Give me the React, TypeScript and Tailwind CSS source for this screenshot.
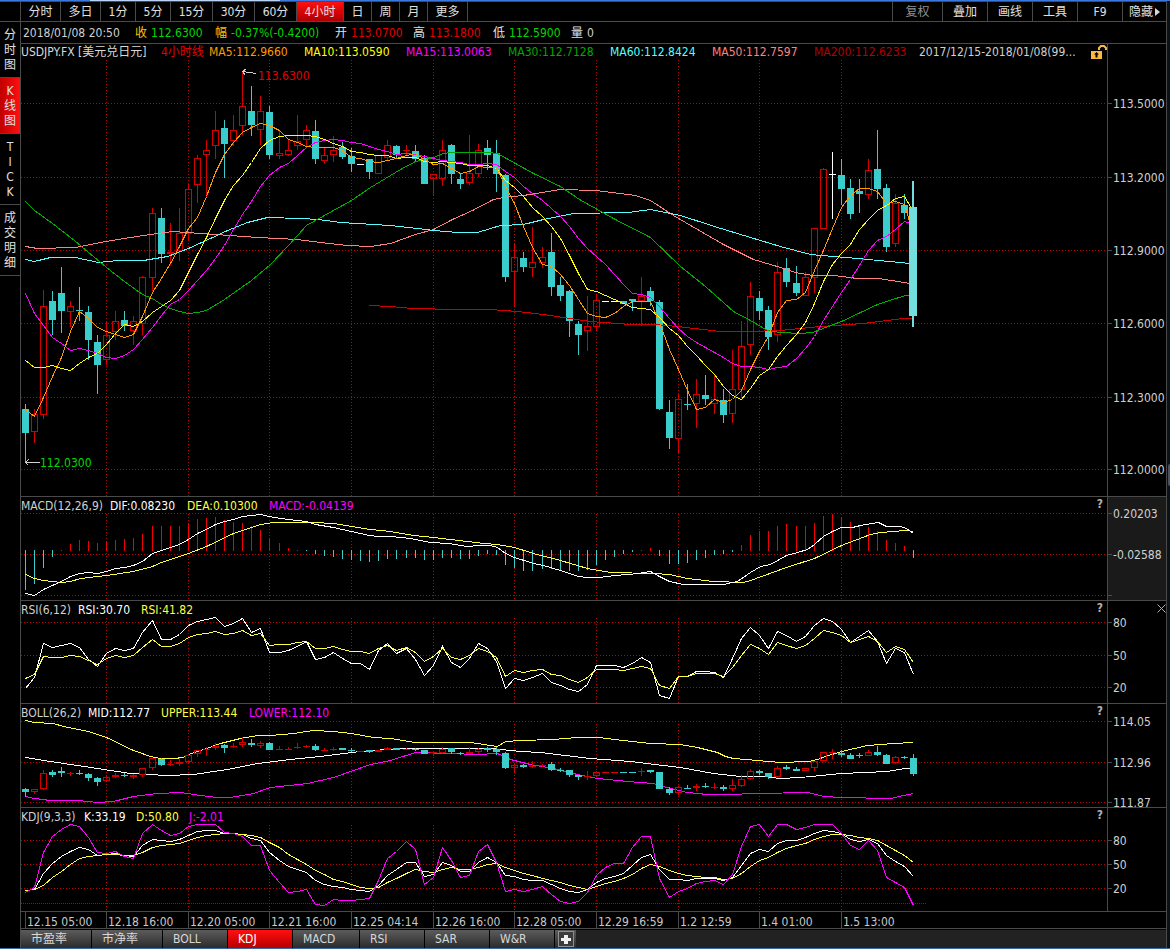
import React from "react";

/* ---------- scale helpers ---------- */

const LEFT = 21;
const cx = (i: number) => Math.floor(25.006 + 9.0713 * i);

type Kind = "u" | "d" | "w";
type Candle = [Kind, number, number, number, number]; // kind, high, body top, body bottom, low

const CANDLES: Candle[] = [
  ["d", 404, 409, 433, 462], ["u", 409, 414, 432, 443], ["u", 290, 306, 415, 419], ["d", 291, 301, 320, 335],
  ["d", 267, 293, 311, 333], ["u", 301, 306, 312, 327], ["d", 287, 310, 311, 321], ["d", 306, 312, 340, 360],
  ["d", 335, 342, 365, 394], ["u", 321, 335, 360, 365], ["u", 311, 321, 332, 340], ["d", 311, 320, 326, 331],
  ["u", 316, 321, 331, 345], ["u", 276, 277, 324, 335], ["u", 208, 213, 278, 291], ["d", 208, 218, 254, 263],
  ["u", 223, 252, 254, 265], ["u", 208, 233, 251, 261], ["u", 184, 189, 234, 240], ["u", 155, 158, 185, 203],
  ["u", 140, 150, 155, 198], ["u", 111, 130, 146, 159], ["d", 120, 128, 144, 178], ["u", 115, 130, 141, 146],
  ["u", 71, 106, 126, 135], ["d", 86, 111, 125, 136], ["u", 96, 111, 130, 145], ["d", 106, 112, 155, 159],
  ["u", 130, 153, 156, 159], ["u", 140, 150, 155, 156], ["u", 115, 141, 146, 150], ["u", 125, 130, 140, 147],
  ["d", 120, 131, 159, 164], ["u", 147, 155, 161, 164], ["u", 136, 150, 155, 162], ["d", 142, 147, 157, 159],
  ["d", 148, 156, 164, 172], ["w", 164, 164, 165, 165], ["d", 159, 159, 172, 179], ["u", 155, 155, 174, 174],
  ["u", 140, 145, 158, 160], ["d", 145, 146, 155, 158], ["u", 145, 150, 151, 155], ["d", 145, 151, 159, 162],
  ["d", 155, 158, 184, 184], ["u", 174, 174, 179, 196], ["u", 140, 150, 179, 186], ["d", 144, 145, 174, 184],
  ["d", 174, 179, 184, 189], ["u", 135, 173, 183, 185], ["u", 144, 150, 174, 177], ["d", 140, 148, 155, 170],
  ["d", 140, 153, 174, 192], ["d", 174, 175, 277, 282], ["u", 243, 257, 272, 307], ["d", 252, 258, 267, 272],
  ["u", 227, 262, 268, 277], ["u", 247, 257, 263, 268], ["d", 233, 252, 287, 296], ["d", 277, 285, 296, 301],
  ["d", 290, 291, 321, 337], ["d", 321, 324, 335, 355], ["u", 296, 326, 331, 351], ["u", 294, 300, 327, 331],
  ["w", 301, 301, 302, 302], ["w", 301, 301, 302, 302], ["d", 301, 301, 304, 304], ["d", 299, 299, 301, 311],
  ["u", 277, 296, 301, 326], ["d", 287, 291, 301, 306], ["d", 300, 302, 409, 410], ["d", 400, 412, 438, 449],
  ["u", 394, 399, 439, 453], ["d", 384, 404, 405, 410], ["u", 379, 394, 404, 428], ["d", 375, 395, 399, 405],
  ["u", 375, 399, 404, 414], ["d", 389, 400, 415, 423], ["u", 350, 389, 414, 423], ["u", 321, 346, 390, 398],
  ["u", 282, 296, 345, 355], ["d", 291, 298, 311, 320], ["d", 306, 310, 337, 350], ["u", 262, 272, 335, 342],
  ["d", 258, 268, 282, 287], ["d", 266, 283, 293, 296], ["u", 272, 277, 296, 296], ["u", 228, 228, 278, 293],
  ["u", 168, 169, 229, 229], ["w", 152, 174, 175, 219], ["d", 159, 175, 189, 205], ["d", 179, 188, 214, 219],
  ["d", 179, 191, 194, 213], ["u", 159, 170, 195, 199], ["d", 130, 169, 189, 199], ["d", 184, 188, 247, 252],
  ["u", 194, 203, 244, 247], ["d", 194, 205, 213, 219], ["d", 181, 207, 316, 327],
];

const closes = CANDLES.map(([k, , t, b]) => (k === "d" ? b : t));

const average = (n: number, seed: number[]) =>
  closes.map((_, i) =>
    i < n - 1 ? seed[i] : Math.round(closes.slice(i - n + 1, i + 1).reduce((a, b) => a + b, 0) / n),
  );

const series = (ys: number[]) => ys.map((y, i) => `${cx(i)},${y}`).join(" ");

const MA5 = series(average(5, [409, 416, 397, 376]));
const MA10 = series(average(10, [360, 367, 367, 365, 368, 370, 363, 357, 353]));
const MA15 = series(average(15, [293, 313, 325, 337, 343, 350, 348, 350, 353, 357, 358, 355, 349, 339]));
const MA30 =
  "25,201 34,210 52,223 61,230 74,240 81,246 106,267 124,281 142,294 152,298 161,304 170,308 179,311 188,313 197,312 206,310 224,299 251,280 270,264 288,245 306,225 351,200 370,187 390,175 400,169 415,161 433,157 443,153 451,152 487,152 497,153 533,173 560,186 579,199 613,218 650,237 680,266 705,286 733,311 750,320 767,330 772,331 780,332 800,333 812,332 841,321 877,304 886,301 905,295 910,295";
const MA60 =
  "25,259 34,261 50,257 75,257 98,262 117,260 143,260 167,256 188,248 210,238 227,230 247,222 267,217 300,218 318,219 340,222 390,225 417,228 433,230 457,232 477,232 500,225 523,224 543,219 573,213 628,212 650,209 680,215 714,226 750,237 780,246 810,254 857,258 910,263";
const MA50 =
  "25,246 37,248 75,247 100,242 123,238 150,234 172,231 200,233 230,235 257,237 297,239 320,242 347,245 370,246 390,243 415,234 433,229 452,219 472,210 493,199 503,197 523,195 560,189 595,190 635,195 650,200 673,215 697,229 723,244 753,259 780,267 795,272 812,275 833,275 857,278 878,278 910,283";
const MA200 =
  "369,305 390,306 412,308 457,309 490,309 517,311 543,314 590,321 630,324 653,324 677,326 720,331 760,331 767,330 780,330 820,326 863,323 903,318 913,318";

const MACD_BARS = [
  590, 584, 568, 557, 550, 544, 540, 541, 543, 542, 540, 539, 538, 534, 526, 526, 526, 526, 523, 519, 518, 517, 520,
  522, 523, 526, 530, 538, 543, 548, 550, 551, 554, 556, 557, 559, 560, 561, 562, 561, 559, 559, 558, 558, 560, 560,
  558, 558, 559, 559, 556, 554, 555, 565, 568, 571, 571, 569, 569, 571, 571, 571, 570, 565, 560, 557, 554, 552, 550,
  548, 556, 564, 564, 563, 560, 558, 555, 554, 552, 545, 535, 531, 531, 526, 524, 526, 526, 523, 516, 514, 517, 522,
  526, 527, 531, 540, 543, 546, 558,
];
const DIF =
  "25,593 34,595 43,589 52,585 61,581 70,576 79,573 88,572 97,573 106,571 115,568 124,567 133,565 142,561 152,553 161,550 170,547 179,544 188,539 197,533 206,529 215,524 224,521 233,519 242,516 251,515 260,514 269,516 280,518 297,520 306,521 315,524 333,527 351,531 369,535 378,536 390,536 410,538 430,542 448,543 467,546 478,545 490,545 497,547 505,553 514,557 533,563 543,565 560,570 578,576 587,577 598,577 615,575 638,573 650,571 659,576 669,581 683,584 710,584 723,584 737,581 750,572 760,566 770,564 786,555 797,552 807,549 814,544 823,536 832,531 841,527 852,527 860,525 878,522 886,526 900,526 906,528 913,533";
const DEA =
  "25,574 34,578 43,580 61,582 70,581 80,578 106,575 133,571 152,566 161,562 188,553 206,546 233,533 260,524 273,522 313,522 333,523 351,526 370,529 390,531 413,535 433,537 467,541 483,543 497,544 514,547 533,553 560,560 587,568 610,572 653,573 669,574 687,578 713,581 743,582 750,580 786,567 814,558 841,545 870,534 880,532 905,530 913,531";

const RSI6 = series([
  688, 677, 643, 647, 645, 643, 647, 659, 666, 653, 648, 650, 648, 632, 620, 639, 639, 634, 625, 621, 619, 617, 626,
  623, 618, 632, 628, 652, 652, 650, 646, 641, 659, 657, 652, 658, 663, 663, 669, 650, 643, 653, 648, 659, 675, 665,
  646, 662, 667, 658, 643, 648, 661, 688, 678, 680, 677, 673, 682, 685, 689, 691, 684, 665, 665, 665, 667, 663, 657,
  662, 695, 698, 676, 676, 671, 671, 672, 677, 658, 638, 627, 635, 648, 631, 635, 641, 636, 625, 618, 621, 629, 642,
  636, 630, 641, 663, 648, 652, 674,
]);
const RSI12 = series([
  678, 674, 656, 657, 657, 655, 656, 660, 664, 658, 655, 657, 655, 647, 639, 646, 646, 643, 637, 634, 633, 631, 634,
  633, 630, 635, 633, 645, 644, 644, 642, 641, 648, 648, 646, 649, 651, 651, 653, 648, 645, 650, 647, 652, 661, 656,
  648, 657, 659, 655, 648, 651, 657, 676, 670, 672, 670, 669, 674, 675, 679, 682, 677, 669, 669, 669, 670, 668, 666,
  668, 685, 688, 676, 676, 673, 673, 673, 676, 667, 655, 644, 648, 654, 642, 645, 648, 645, 638, 630, 632, 635, 642,
  639, 636, 641, 652, 646, 649, 662,
]);

const UPPER =
  "25,720 34,722 53,723 63,726 88,731 106,737 133,750 150,756 160,758 173,758 183,757 188,754 206,748 220,743 240,738 257,735 270,735 293,733 313,730 333,731 351,733 373,737 390,738 415,742 470,742 497,746 505,741 520,740 553,739 577,737 598,737 623,740 650,743 680,744 697,747 717,752 725,756 733,758 757,760 780,762 808,761 817,759 825,756 841,751 867,745 893,743 913,742";
const MID =
  "25,757 50,761 77,765 97,768 130,773 147,774 167,775 193,774 227,769 257,763 290,759 320,756 351,752 370,750 390,749 400,748 457,748 490,748 520,751 540,752 590,758 630,761 663,765 680,767 713,773 740,776 763,776 780,778 800,777 841,773 887,771 905,768 913,768";
const LOWER =
  "25,796 34,798 50,800 77,800 97,802 113,801 133,796 157,793 180,792 200,795 217,797 230,797 253,793 270,787 307,783 333,777 353,770 370,764 390,760 415,752 450,753 477,754 497,753 510,759 530,764 553,768 577,774 597,778 627,781 653,783 670,788 687,792 707,794 727,794 757,793 808,792 823,796 841,797 890,798 903,795 913,793";

const KLINE = series([
  890, 889, 873, 863, 856, 851, 847, 849, 855, 854, 853, 855, 856, 845, 839, 840, 841, 839, 835, 831, 830, 830, 833,
  833, 834, 838, 840, 852, 860, 866, 869, 872, 880, 884, 886, 887, 889, 890, 891, 885, 875, 869, 862, 862, 876, 874,
  862, 865, 871, 871, 862, 857, 862, 875, 876, 879, 880, 880, 884, 888, 891, 892, 889, 882, 878, 876, 873, 865, 857,
  854, 869, 879, 879, 880, 878, 878, 878, 880, 877, 865, 853, 849, 851, 843, 840, 840, 837, 833, 830, 831, 833, 839,
  841, 839, 843, 855, 861, 866, 876,
]);
const DLINE = series([
  890, 889, 885, 877, 871, 864, 858, 856, 855, 854, 854, 855, 855, 852, 847, 845, 844, 843, 840, 837, 835, 834, 833,
  833, 834, 835, 837, 842, 847, 854, 859, 864, 870, 874, 879, 881, 884, 887, 888, 887, 882, 878, 873, 869, 871, 872,
  869, 867, 869, 869, 867, 864, 863, 867, 870, 873, 875, 878, 880, 882, 885, 887, 889, 886, 883, 881, 878, 874, 868,
  864, 866, 870, 873, 875, 876, 877, 877, 879, 878, 873, 866, 860, 857, 852, 848, 845, 843, 839, 836, 834, 834, 835,
  837, 838, 840, 845, 850, 855, 862,
]);
const JLINE = series([
  892, 887, 852, 836, 829, 824, 826, 837, 852, 853, 851, 856, 858, 833, 824, 830, 835, 833, 826, 824, 824, 824, 832,
  833, 836, 845, 845, 870, 882, 892, 891, 889, 904, 905, 899, 900, 900, 899, 898, 880, 858, 851, 841, 849, 884, 877,
  847, 860, 877, 875, 851, 844, 862, 891, 889, 891, 889, 886, 894, 901, 903, 901, 892, 875, 867, 863, 863, 847, 836,
  836, 878, 897, 891, 888, 883, 881, 880, 884, 874, 846, 826, 824, 836, 824, 824, 829, 827, 824, 824, 824, 833, 845,
  849, 840, 850, 877, 882, 887, 905,
]);

const DATES = [
  "12.15 05:00", "12.18 16:00", "12.20 05:00", "12.21 16:00", "12.25 04:14", "12.26 16:00", "12.28 05:00",
  "12.29 16:59", "1.2 12:59", "1.4 01:00", "1.5 13:00",
];

/* ---------- drawing parts ---------- */

function Line({ points, color }: { points: string; color: string }) {
  return <polyline points={points} fill="none" stroke={color} transform="translate(0.5 0.5)" />;
}

function Candles({ map, compact }: { map: (y: number) => number; compact?: boolean }) {
  return (
    <>
      {CANDLES.map(([kind, high, top, bottom, low], i) => {
        const x = cx(i);
        const [h, t, b, l] = [high, top, bottom, low].map((y) => Math.round(map(y)));
        const body = Math.max(1, b - t);
        if (kind === "u" || (compact && kind === "w")) {
          return (
            <g key={i} fill="#d40000">
              <rect x={x} y={h} width={1} height={Math.max(0, t - h)} />
              <rect x={x} y={b} width={1} height={Math.max(0, l - b)} />
              {body > 2 ? (
                <rect x={x - 2.5} y={t + 0.5} width={6} height={body - 1} fill="none" stroke="#d40000" />
              ) : (
                <rect x={x - 3} y={t} width={7} height={body} />
              )}
            </g>
          );
        }
        return (
          <g key={i} fill={kind === "w" ? "#ffffff" : "#3bcccc"}>
            <rect x={x} y={h} width={1} height={Math.max(1, l - h)} />
            <rect x={x - 3} y={t} width={7} height={body} />
          </g>
        );
      })}
    </>
  );
}

function Plot({
  top, rows, className, label, vTop, children,
}: {
  top: number; rows: number[]; className: string; label: string; vTop: number; children: React.ReactNode;
}) {
  return (
    <svg
      role="img"
      aria-label={label}
      className={`block w-full shrink-0 overflow-hidden ${className}`}
      shapeRendering="crispEdges"
    >
      {rows.map((y) => (
        <line key={y} x1="0" x2="100%" y1={y - top + 0.5} y2={y - top + 0.5} stroke="#b80000" strokeDasharray="1 2" />
      ))}
      <g transform={`translate(${-LEFT} ${-top})`}>
        {DATES.slice(1).map((d, k) => {
          const x = cx((k + 1) * 9) + 0.5;
          return <line key={d} x1={x} x2={x} y1={vTop} y2={top + 500} stroke="#b80000" strokeDasharray="1 2" />;
        })}
        {children}
      </g>
    </svg>
  );
}

function Axis({ top, ticks, className }: { top: number; ticks: [number, string][]; className: string }) {
  return (
    <svg className={`relative z-10 block w-[58px] shrink-0 overflow-visible ${className}`}>
      {ticks.map(([y, t]) => (
        <g key={y}>
          <rect x={0} y={y - top} width={4} height={1} fill="#4a4a4a" />
          <text x={5} y={y - top + 5} fill="#d0d0d0">
            {t}
          </text>
        </g>
      ))}
    </svg>
  );
}

type Part = [string, string];

function Panel({
  parts, axis, close, children,
}: {
  parts: Part[]; axis: React.ReactNode; close?: boolean; children: React.ReactNode;
}) {
  return (
    <section className="flex border-t border-[#4a4a4a]">
      <div className="flex min-w-0 flex-1 flex-col border-r border-[#4a4a4a]">
        <div className="flex h-4 items-center pt-0.5 pr-1">
          {parts.map(([text, cls]) => (
            <span key={text} className={`whitespace-nowrap ${cls}`}>
              {text}
            </span>
          ))}
          <button type="button" aria-label="指标说明" className="ml-auto pb-1 font-bold text-[#b0b0b0]">
            ?
          </button>
        </div>
        {children}
      </div>
      <div className="relative flex">
        {axis}
        {close && (
          <button type="button" aria-label="关闭" className="absolute top-[3px] right-0 z-20">
            <svg className="block h-[9px] w-[9px]" viewBox="0 0 9 9">
              <path d="M0.5 0.5L8.5 8.5M8.5 0.5L0.5 8.5" stroke="#b0b0b0" />
            </svg>
          </button>
        )}
      </div>
    </section>
  );
}

/* ---------- page ---------- */

const PERIODS: [string, string][] = [
  ["分时", "w-10"], ["多日", "w-10"], ["1分", "w-[35px]"], ["5分", "w-[35px]"], ["15分", "w-[42px]"],
  ["30分", "w-[42px]"], ["60分", "w-[42px]"], ["4小时", "w-[47px]"], ["日", "w-7"], ["周", "w-7"], ["月", "w-7"],
  ["更多", "w-10"],
];
const TOOLS: [string, string][] = [
  ["复权", "w-[50px]"], ["叠加", "w-[45px]"], ["画线", "w-[45px]"], ["工具", "w-[45px]"], ["F9", "w-[45px]"],
  ["隐藏", "w-11"],
];
const SIDE = ["分时图", "K线图", "TICK", "成交明细"];
const QUOTES: [string, string, string, string, string][] = [
  ["收", "112.6300", "text-[#ffc000]", "text-[#00d800]", "w-20"],
  ["幅", "-0.37%(-0.4200)", "text-[#ffc000]", "text-[#00d800]", "w-[120px]"],
  ["开", "113.0700", "text-[#e0e0e0]", "text-[#e00000]", "w-[78px]"],
  ["高", "113.1800", "text-[#e0e0e0]", "text-[#e00000]", "w-20"],
  ["低", "112.5900", "text-[#e0e0e0]", "text-[#00d800]", "w-[78px]"],
  ["量", "0", "text-[#e0e0e0]", "text-[#d0d0d0]", "w-20"],
];
const LEGEND: Part[] = [
  ["USDJPY.FX [美元兑日元]", "w-[140px] text-[#d8d8d8]"],
  ["4小时线", "w-12 text-[#e00000]"],
  ["MA5:112.9660", "w-[95px] text-[#ff9a00]"],
  ["MA10:113.0590", "w-[102px] text-[#ffff00]"],
  ["MA15:113.0063", "w-[102px] text-[#ff00ff]"],
  ["MA30:112.7128", "w-[102px] text-[#00a800]"],
  ["MA60:112.8424", "w-[102px] text-[#55ffff]"],
  ["MA50:112.7597", "w-[102px] text-[#ff8080]"],
  ["MA200:112.6233", "w-[105px] text-[#b40000]"],
  ["2017/12/15-2018/01/08(99...", "w-[172px] text-[#d0d0d0]"],
];
const TABS: [string, string][] = [
  ["市盈率", "w-[71px]"], ["市净率", "w-[71px]"], ["BOLL", "w-[65px]"], ["KDJ", "w-[65px]"], ["MACD", "w-[67px]"],
  ["RSI", "w-[65px]"], ["SAR", "w-[65px]"], ["W&R", "w-[65px]"],
];

export default function App() {
  return (
    <div className="flex min-h-screen flex-col bg-black font-['DejaVu_Sans_Condensed','Noto_Sans','Noto_Sans_CJK_SC',sans-serif] text-[12px] leading-4 text-[#e0e0e0]">
      <div className="flex h-px bg-[#3a78e0]">
        <div className="ml-[90px] w-[190px] bg-[#b8d4f8]" />
      </div>
      <div className="flex flex-1">
        <main className="flex min-w-0 flex-1 flex-col border-r border-[#4a4a4a]">
          <nav className="flex h-[21px] border-y border-[#4a4a4a] pl-5">
            <div className="flex border-l border-[#4a4a4a]">
              {PERIODS.map(([t, w]) => (
                <button
                  key={t}
                  type="button"
                  className={`flex items-center justify-center border-r border-[#4a4a4a] pt-px whitespace-nowrap ${w} ${
                    t === "4小时" ? "bg-linear-to-b from-[#ff1010] to-[#b00000]" : ""
                  }`}
                >
                  {t}
                </button>
              ))}
            </div>
            <div className="ml-auto flex">
              {TOOLS.map(([t, w]) => (
                <button
                  key={t}
                  type="button"
                  className={`flex items-center justify-center gap-0.5 border-l border-[#4a4a4a] pt-px whitespace-nowrap ${w} ${
                    t === "复权" ? "text-[#909090]" : ""
                  }`}
                >
                  {t}
                  {t === "隐藏" && (
                    <svg className="h-2 w-[5px]" viewBox="0 0 5 8">
                      <path d="M0 0L5 4L0 8Z" fill="#d8d8d8" />
                    </svg>
                  )}
                </button>
              ))}
            </div>
          </nav>

          <div className="flex flex-1">
            <aside className="flex w-[21px] shrink-0 flex-col border-r border-[#4a4a4a]">
              {SIDE.map((t) => (
                <button
                  key={t}
                  type="button"
                  aria-label={t}
                  className={`flex flex-col items-center border-b border-[#4a4a4a] pt-1.5 pb-1 leading-[15px] ${
                    t === "K线图" ? "bg-linear-to-r from-[#c00000] to-[#ff1010]" : ""
                  }`}
                >
                  {[...t].map((c, k) => (
                    <span key={k}>{c}</span>
                  ))}
                </button>
              ))}
            </aside>

            <div className="flex min-w-0 flex-1 flex-col">
              <div className="flex h-[21px] items-center overflow-hidden pl-0.5">
                <span className="w-28 shrink-0 text-[#d0d0d0]">2018/01/08 20:50</span>
                {QUOTES.map(([name, value, c1, c2, w]) => (
                  <span key={name} className={`flex shrink-0 gap-1 ${w}`}>
                    <span className={c1}>{name}</span>
                    <span className={c2}>{value}</span>
                  </span>
                ))}
              </div>

              <section className="flex border-t border-[#4a4a4a]">
                <div className="flex min-w-0 flex-1 flex-col border-r border-[#4a4a4a]">
                  <div className="flex h-4 items-center overflow-hidden">
                    {LEGEND.map(([t, cls]) => (
                      <span key={t} className={`shrink-0 whitespace-nowrap ${cls}`}>
                        {t}
                      </span>
                    ))}
                    <button type="button" aria-label="解锁" className="shrink-0">
                      <svg className="block h-3.5 w-4" viewBox="0 0 16 14">
                        <rect x="0" y="6" width="11" height="8" fill="#ffb938" />
                        <path d="M8 5V3L10 1H13L15 3V5" fill="none" stroke="#ffb938" strokeWidth="2" />
                        <path d="M5.5 7L8 9.5H6.5V12.5H4.5V9.5H3Z" fill="#000" />
                      </svg>
                    </button>
                  </div>
                  <Plot top={60} rows={[103, 177, 250, 323, 397, 469]} className="h-[436px]" label="K线" vTop={60}>
                    <Candles map={(y) => y} />
                    <Line points={MA200} color="#d00000" />
                    <Line points={MA50} color="#ff8080" />
                    <Line points={MA60} color="#55ffff" />
                    <Line points={MA30} color="#00b000" />
                    <Line points={MA15} color="#ff00ff" />
                    <Line points={MA10} color="#ffff00" />
                    <Line points={MA5} color="#ff9a00" />
                    <g fill="#74dede">
                      <rect x={912} y={181} width={2} height={146} />
                      <rect x={909} y={207} width={8} height={109} />
                    </g>
                    <path
                      d="M242.5 71.5L256.5 73.5M242.5 71.5L246.5 68.5M242.5 71.5L245.5 75.5M25.5 462.5H39.5M25.5 462.5L28.5 459.5M25.5 462.5L28.5 465.5"
                      fill="none"
                      stroke="#d0d0d0"
                    />
                    <text x={258} y={80} fill="#e00000">113.6300</text>
                    <text x={40} y={467} fill="#00d800">112.0300</text>
                  </Plot>
                </div>
                <Axis
                  top={44}
                  className="h-[452px]"
                  ticks={[
                    [103, "113.5000"], [177, "113.2000"], [250, "112.9000"], [323, "112.6000"], [397, "112.3000"],
                    [469, "112.0000"],
                  ]}
                />
              </section>

              <Panel
                parts={[
                  ["MACD(12,26,9)", "w-[89px] text-[#d0d0d0]"], ["DIF:0.08230", "w-[77px] text-white"],
                  ["DEA:0.10300", "w-[82px] text-[#ffff40]"], ["MACD:-0.04139", "text-[#ff00ff]"],
                ]}
                axis={
                  <Axis
                    top={497}
                    className="h-[103px] bg-[#1a1a1a]"
                    ticks={[[513, "0.20203"], [554, "-0.02588"], [595, ""]]}
                  />
                }
              >
                <Plot top={513} rows={[513, 554, 595]} className="h-[87px]" label="MACD" vTop={514}>
                  {MACD_BARS.map((y, i) =>
                    y <= 550 ? (
                      <rect key={i} x={cx(i)} y={y} width={1} height={551 - y} fill="#f00000" />
                    ) : (
                      <rect key={i} x={cx(i)} y={550} width={1} height={y - 550} fill="#3bcccc" />
                    ),
                  )}
                  <Line points={DEA} color="#ffff40" />
                  <Line points={DIF} color="#ffffff" />
                </Plot>
              </Panel>

              <Panel
                close
                parts={[
                  ["RSI(6,12)", "w-[57px] text-[#d0d0d0]"], ["RSI:30.70", "w-[63px] text-white"],
                  ["RSI:41.82", "text-[#ffff40]"],
                ]}
                axis={<Axis top={601} className="h-[102px]" ticks={[[622, "80"], [655, "50"], [687, "20"]]} />}
              >
                <Plot top={617} rows={[622, 655, 687]} className="h-[86px]" label="RSI" vTop={618}>
                  <Line points={RSI6} color="#ffffff" />
                  <Line points={RSI12} color="#ffff40" />
                </Plot>
              </Panel>

              <Panel
                parts={[
                  ["BOLL(26,2)", "w-[67px] text-[#d0d0d0]"], ["MID:112.77", "w-[73px] text-white"],
                  ["UPPER:113.44", "w-[88px] text-[#ffff40]"], ["LOWER:112.10", "text-[#ff00ff]"],
                ]}
                axis={
                  <Axis
                    top={704}
                    className="h-[103px]"
                    ticks={[[721, "114.05"], [762, "112.96"], [802, "111.87"]]}
                  />
                }
              >
                <Plot top={720} rows={[721, 762, 802]} className="h-[87px]" label="BOLL" vTop={724}>
                  <Line points={UPPER} color="#ffff40" />
                  <Line points={MID} color="#ffffff" />
                  <Line points={LOWER} color="#ff00ff" />
                  <Candles compact map={(y) => 741.6 + (y - 103) * 0.1533} />
                </Plot>
              </Panel>

              <Panel
                parts={[
                  ["KDJ(9,3,3)", "w-[63px] text-[#d0d0d0]"], ["K:33.19", "w-[52px] text-white"],
                  ["D:50.80", "w-[53px] text-[#ffff40]"], ["J:-2.01", "text-[#ff00ff]"],
                ]}
                axis={<Axis top={808} className="h-[103px]" ticks={[[840, "80"], [864, "50"], [888, "20"]]} />}
              >
                <Plot top={824} rows={[840, 864, 888]} className="h-[87px]" label="KDJ" vTop={825}>
                  <line x1={21} x2={926} y1={903.5} y2={903.5} stroke="#b80000" strokeDasharray="1 1" />
                  <Line points={KLINE} color="#ffffff" />
                  <Line points={DLINE} color="#ffff40" />
                  <Line points={JLINE} color="#ff00ff" />
                </Plot>
              </Panel>

              <svg className="block h-[18px] w-full shrink-0 border-y border-[#4a4a4a]">
                {DATES.map((d, k) => (
                  <g key={d}>
                    <rect x={cx(k * 9) - LEFT} y={0} width={1} height={16} fill="#4a4a4a" />
                    <text x={cx(k * 9) - LEFT + 2} y={14} fill="#c8c8c8">
                      {d}
                    </text>
                  </g>
                ))}
              </svg>

              <div className="mt-px flex h-[18px] bg-[#222222]">
                {TABS.map(([t, w]) => (
                  <button
                    key={t}
                    type="button"
                    className={`flex items-center border-r border-black bg-linear-to-b pl-2.5 ${w} ${
                      t === "KDJ" ? "from-[#ff1010] to-[#b80000] text-white" : "from-[#5c5c5c] to-[#2c2c2c] text-[#d8d8d8]"
                    }`}
                  >
                    {t}
                  </button>
                ))}
                <button
                  type="button"
                  aria-label="添加指标"
                  className="flex w-[21px] items-center justify-center bg-linear-to-b from-[#5c5c5c] to-[#2c2c2c]"
                >
                  <svg className="block h-4 w-4" viewBox="0 0 16 16" shapeRendering="crispEdges">
                    <rect x="0.5" y="0.5" width="15" height="15" fill="#3c3c3c" stroke="#909090" />
                    <path d="M6 4H10V7H13V10H10V13H6V10H3V7H6Z" fill="#f0f0f0" />
                  </svg>
                </button>
              </div>
            </div>
          </div>
        </main>
        <div className="w-[3px] bg-[#0c111b] pt-[463px]">
          <div className="ml-px h-[22px] rounded-l bg-[#4c5260]" />
        </div>
      </div>
      <div className="h-px bg-[#3c68a8]" />
    </div>
  );
}
